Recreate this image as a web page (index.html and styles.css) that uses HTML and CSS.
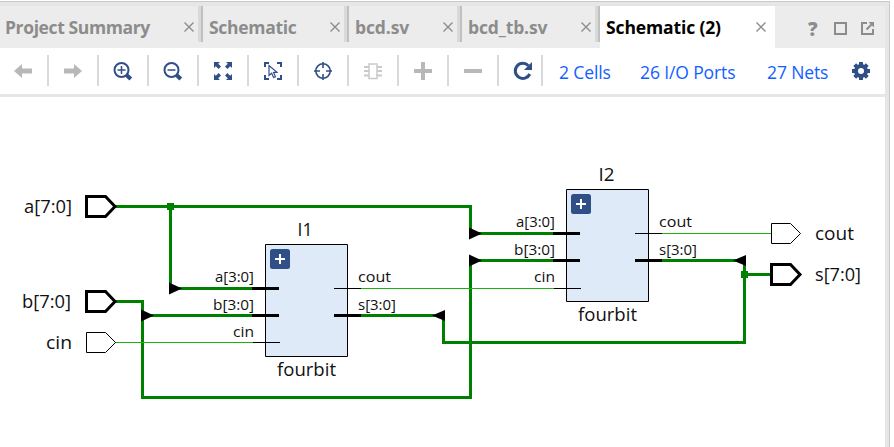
FILE: index.html
```html
<!DOCTYPE html>
<html lang="en">
<head>
<meta charset="utf-8">
<title>Schematic (2)</title>
<link rel="stylesheet" href="styles.css">
</head>
<body>
<div class="panel">
  <header class="tabs">
    <div class="tab tab-summary"><span class="name">Project Summary</span><svg class="close" viewBox="0 0 10 10"><path d="M.5.500l9 9M9.500.500l-9 9"/></svg></div>
    <div class="tab tab-schematic"><span class="name">Schematic</span><svg class="close" viewBox="0 0 10 10"><path d="M.5.500l9 9M9.500.500l-9 9"/></svg></div>
    <div class="tab tab-bcd"><span class="name">bcd.sv</span><svg class="close" viewBox="0 0 10 10"><path d="M.5.500l9 9M9.500.500l-9 9"/></svg></div>
    <div class="tab tab-tb"><span class="name">bcd_tb.sv</span><svg class="close" viewBox="0 0 10 10"><path d="M.5.500l9 9M9.500.500l-9 9"/></svg></div>
    <div class="tab active"><span class="name">Schematic (2)</span><svg class="close" viewBox="0 0 10 10"><path d="M.5.500l9 9M9.500.500l-9 9"/></svg></div>
    <div class="window-actions">
      <span class="help">?</span>
      <svg width="13" height="13" viewBox="0 0 13 13"><path class="outline" d="M1 1h11v11H1z"/></svg>
      <svg width="13" height="13" viewBox="0 0 13 13"><path class="outline" d="M6 1H1v11h11V7M5.500 7.500L11 2"/><path class="solid" d="M7.500 0H13v5.500z"/></svg>
    </div>
  </header>
  <nav class="toolbar">
    <div class="tool"><svg class="muted" viewBox="0 0 20 20"><path class="fill" d="M1 10l8-7v4.500h10v5H9V17z"/></svg></div>
    <div class="tool"><svg class="muted" viewBox="0 0 20 20"><path class="fill" d="M19 10l-8-7v4.500H1v5h10V17z"/></svg></div>
    <div class="tool"><svg viewBox="0 0 20 20"><circle cx="8.500" cy="9" r="7" stroke-width="2"/><path d="M4.500 9h8M8.500 5v8" stroke-width="1.500"/><path d="M13.500 14l4.300 4" stroke-width="4"/></svg></div>
    <div class="tool"><svg viewBox="0 0 20 20"><circle cx="8.500" cy="9" r="7" stroke-width="2"/><path d="M4.500 9h8" stroke-width="1.500"/><path d="M13.500 14l4.300 4" stroke-width="4"/></svg></div>
    <div class="tool"><svg viewBox="0 0 20 20"><path class="fill" d="M1 1h6L5.200 2.800 8 5.600 5.600 8 2.800 5.200 1 7zM19 1h-6l1.800 1.800L12 5.600 14.400 8l2.800-2.800L19 7zM1 19h6l-1.800-1.800L8 14.400 5.600 12l-2.800 2.800L1 13zM19 19h-6l1.800-1.800-2.800-2.800 2.400-2.400 2.800 2.800L19 13z"/></svg></div>
    <div class="tool"><svg viewBox="0 0 20 20"><path d="M6 2H2v4M14 2h4v4M6 18H2v-4M14 18h4v-4" stroke-width="2"/><path d="M6 4.500v10l2.600-2.200 2 4.200 1.900-.9-2-4 3.500-.4z" stroke-width="1.200"/></svg></div>
    <div class="tool"><svg viewBox="0 0 20 20"><circle cx="10" cy="10" r="7.200" stroke-width="1.600"/><path d="M10 1v6M10 13v6M1 10h6M13 10h6" stroke-width="1.600"/></svg></div>
    <div class="tool"><svg class="pale" viewBox="0 0 20 20"><path d="M6 3h8v14.500H6z" stroke-width="1.500"/><path d="M1 6h5M1 10h5M1 14.500h5M14 6h5M14 10h5M14 14.500h5" stroke-width="1.800"/></svg></div>
    <div class="tool"><svg class="muted" viewBox="0 0 20 20"><path d="M1 10h18M10 1v18" stroke-width="4"/></svg></div>
    <div class="tool"><svg class="muted" viewBox="0 0 20 20"><path d="M1 10h18" stroke-width="4"/></svg></div>
    <div class="tool refresh"><svg viewBox="0 0 20 20"><path d="M15.500 4.700A7.600 7.600 0 1 0 16.800 13" stroke-width="3"/><path class="fill" d="M19 1v8h-8z"/></svg></div>
    <div class="stats">
      <a class="cells">2 Cells</a><a class="ports">26 I/O Ports</a><a class="nets">27 Nets</a>
      <svg class="gear" viewBox="0 0 20 20"><path d="M10 1v18M1 10h18M3.700 3.700l12.600 12.600M16.300 3.700L3.700 16.300" stroke-width="4"/><circle cx="10" cy="10" r="5" stroke-width="4"/><circle class="hole" cx="10" cy="10" r="3"/></svg>
    </div>
  </nav>
  <main class="canvas">
    <svg class="schematic" width="885" height="350" viewBox="0 97 885 350">
      <g class="bus">
        <path d="M115 206.500H470.500V233.500H553"/>
        <path d="M170.500 206.500V288.500H252"/>
        <path d="M115 301.500H142.500V397.500H470.500V260.500H553"/>
        <path d="M142.500 315.500H252"/>
        <path d="M361 315.500H443.500V342.500H744.500V260.500H662"/>
        <path d="M744.500 274.500H771"/>
      </g>
      <path class="net" d="M115 342.500H253M361 288.500H554M662 233.500H771"/>
      <path class="junction" d="M167 203h7v7h-7zM741 271h7v7h-7z"/>
      <path class="arrow" d="M169 282.500l13 6-13 6zM141 309.500l13 6-13 6zM469 227.500l13 6-13 6zM469 254.500l13 6-13 6zM445 310l-13 5.500 13 5.500zM746 255l-13 5.500 13 5.500z"/>
      <g class="cell">
        <path d="M265.500 244.500h82v112h-82zM566.500 189.500h82v112h-82z"/>
      </g>
      <path class="pin-bus" d="M252 288.500h27M252 315.500h27M334 315.500h27M553 233.500h27M553 260.500h27M635 260.500h27"/>
      <path class="pin" d="M253 342.500h27M334 288.500h27M554 288.500h27M635 233.500h27"/>
      <g class="port-bus">
        <path d="M86.500 196.500h19l9.500 10-9.500 10h-19z"/>
        <path d="M86.500 291.500h19l9.500 10-9.500 10h-19z"/>
        <path d="M771.500 264.500h19l9.500 10-9.500 10h-19z"/>
      </g>
      <path class="port" d="M86.500 332.500h19l10 10-10 10h-19zM771.500 223.500h19l10 10-10 10h-19z"/>
      <g class="expand">
        <rect x="270" y="249" width="20" height="20" rx="2.500"/><path d="M275 259h10M280 254v10"/>
        <rect x="571" y="194" width="20" height="20" rx="2.500"/><path d="M576 204h10M581 199v10"/>
      </g>
      <g class="label">
        <text x="24" y="213" textLength="48" lengthAdjust="spacingAndGlyphs">a[7:0]</text>
        <text x="22" y="308" textLength="49" lengthAdjust="spacingAndGlyphs">b[7:0]</text>
        <text x="46" y="349" textLength="26" lengthAdjust="spacingAndGlyphs">cin</text>
        <text x="815" y="240" textLength="39" lengthAdjust="spacingAndGlyphs">cout</text>
        <text x="815" y="281" textLength="46" lengthAdjust="spacingAndGlyphs">s[7:0]</text>
        <text x="297.500" y="236" textLength="15" lengthAdjust="spacingAndGlyphs">I1</text>
        <text x="277" y="376" textLength="59" lengthAdjust="spacingAndGlyphs">fourbit</text>
        <text x="598.500" y="181" textLength="16" lengthAdjust="spacingAndGlyphs">I2</text>
        <text x="578" y="321" textLength="59" lengthAdjust="spacingAndGlyphs">fourbit</text>
      </g>
      <g class="pin-label">
        <text x="215" y="282" textLength="39" lengthAdjust="spacingAndGlyphs">a[3:0]</text>
        <text x="213" y="310" textLength="41" lengthAdjust="spacingAndGlyphs">b[3:0]</text>
        <text x="233" y="337" textLength="21" lengthAdjust="spacingAndGlyphs">cin</text>
        <text x="358" y="282" textLength="33" lengthAdjust="spacingAndGlyphs">cout</text>
        <text x="358" y="310" textLength="38" lengthAdjust="spacingAndGlyphs">s[3:0]</text>
        <text x="516" y="227" textLength="39" lengthAdjust="spacingAndGlyphs">a[3:0]</text>
        <text x="514" y="255" textLength="41" lengthAdjust="spacingAndGlyphs">b[3:0]</text>
        <text x="534" y="282" textLength="21" lengthAdjust="spacingAndGlyphs">cin</text>
        <text x="659" y="227" textLength="33" lengthAdjust="spacingAndGlyphs">cout</text>
        <text x="659" y="255" textLength="38" lengthAdjust="spacingAndGlyphs">s[3:0]</text>
      </g>
    </svg>
  </main>
</div>
</body>
</html>
```
FILE: styles.css
```css
* { box-sizing: border-box; }
body {
  margin: 0;
  padding-top: 1px;
  height: 447px;
  overflow: hidden;
  background: #fff;
  font-family: "Open Sans", "Noto Sans", sans-serif;
}
.panel {
  width: 890px;
  height: 446px;
  border-top: 1px solid #c8cbc8;
  border-right: 1px solid #c8c8c8;
  background: #e6e6e6;
  padding: 4px 4px 0 0;
}
.tabs {
  display: flex;
  height: 42px;
  background: #ececec;
}
.tab {
  position: relative;
  display: flex;
  align-items: center;
  justify-content: space-between;
  height: 42px;
  padding: 0 9px 0 6px;
  color: #8c8c8c;
  font-size: 17.500px;
  font-weight: 700;
  white-space: nowrap;
}
.tab:not(.active)::after {
  content: "";
  position: absolute;
  right: 0;
  top: 0;
  width: 3px;
  height: 36px;
  background: #d9d9d9;
  border-right: 2px solid #c0c0c0;
}
.tab-summary { width: 203px; padding-left: 5px; letter-spacing: -0.38px; }
.tab-schematic { width: 146px; letter-spacing: -0.3px; }
.tab-bcd { width: 113px; letter-spacing: -0.1px; }
.tab-tb { width: 138px; letter-spacing: -0.15px; }
.active { width: 175px; background: #fff; color: #000; letter-spacing: -0.13px; }
.close { width: 10px; height: 10px; fill: none; stroke: #8c8c8c; stroke-width: 1.4; }
.window-actions {
  display: flex;
  align-items: center;
  gap: 14px;
  margin-left: auto;
  padding: 3px 11px 0 0;
}
.help { width: 12px; color: #8c8c8c; font: 800 19px/20px "Open Sans", sans-serif; }
.outline { fill: none; stroke: #8c8c8c; stroke-width: 2; }
.solid { fill: #8c8c8c; }
.toolbar {
  display: flex;
  height: 46px;
  background: #fff;
  padding-top: 7px;
}
.tool {
  display: flex;
  width: 50px;
  height: 31px;
  align-items: center;
  justify-content: flex-end;
  padding-right: 14px;
  border-right: 2px solid #d9d9d9;
}
.tool:first-child { width: 49px; }
.refresh { width: 44px; padding-right: 8px; }
.toolbar svg { width: 20px; height: 20px; flex: none; fill: none; stroke: #314f87; }
.toolbar .fill { fill: #314f87; stroke: none; }
.toolbar .muted { stroke: #b8b8b8; }
.toolbar .muted .fill { fill: #b8b8b8; }
.toolbar .pale { stroke: #cacaca; }
.toolbar .hole { fill: #fff; stroke: none; }
.stats {
  display: flex;
  height: 33px;
  align-items: center;
  padding-left: 16px;
  color: #1260ff;
  font-size: 17.500px;
  letter-spacing: -0.12px;
  white-space: nowrap;
}
.cells { width: 81px; }
.ports { width: 127px; }
.nets { width: 84px; }
.stats .gear { margin-bottom: 2px; }
.canvas { margin-top: 3px; height: 350px; background: #fff; }
.schematic { display: block; }
.bus path { fill: none; stroke: #008000; stroke-width: 3; }
.net { fill: none; stroke: #1fae12; }
.junction { fill: #008000; }
.arrow { fill: #000; }
.cell path { fill: #dfeaf8; stroke: #000; }
.pin-bus { stroke: #000; stroke-width: 3; }
.pin { stroke: #000; }
.port-bus path { fill: #fff; stroke: #000; stroke-width: 3; }
.port { fill: #fff; stroke: #000; }
.expand rect { fill: #314f87; }
.expand path { stroke: #fff; stroke-width: 2; }
.label { font-size: 18.300px; fill: #111; }
.pin-label { font-size: 15.300px; fill: #111; }
```
